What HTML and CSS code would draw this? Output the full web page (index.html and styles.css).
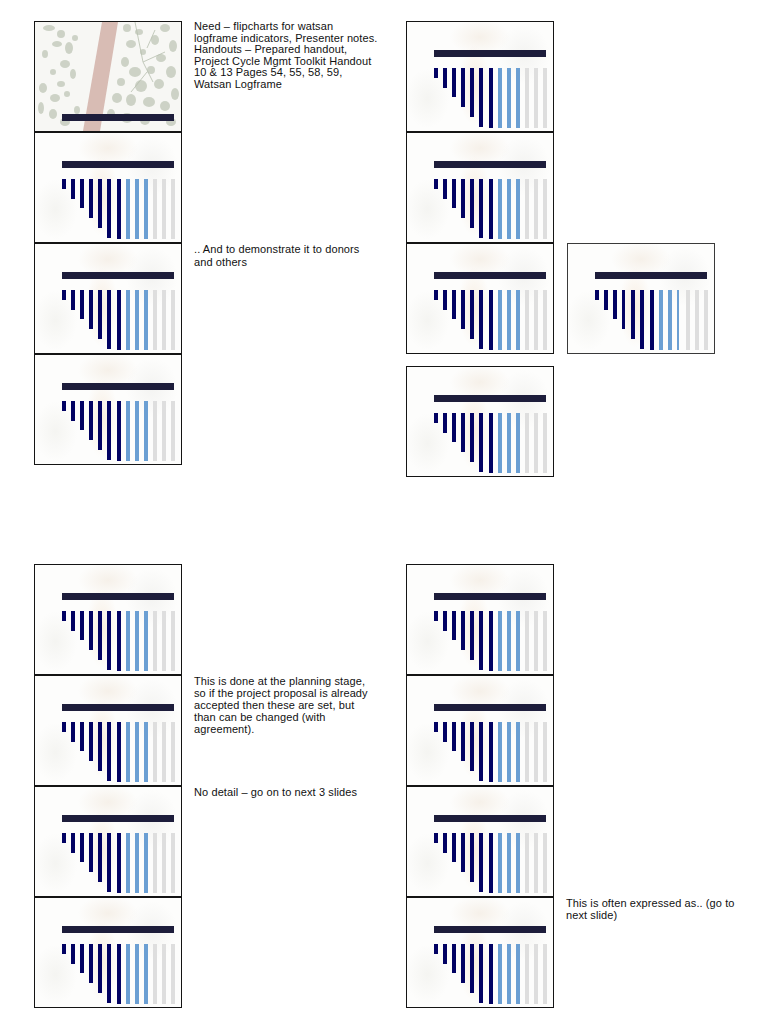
FILE: index.html
```html
<!DOCTYPE html>
<html lang="en">
<head>
<meta charset="utf-8">
<title>Handout slides</title>
<link rel="stylesheet" href="styles.css">
</head>
<body>
<div class="sheet">
  <section class="half">
    <div class="group group-left">
      <div class="row">
        <div class="slide slide-photo">
          <svg class="photo" viewBox="0 0 146 109" preserveAspectRatio="none" aria-hidden="true">
            <rect width="146" height="109" fill="#f7f7f4"/>
            <g fill="#c3cabb" opacity="0.8">
              <ellipse cx="14" cy="6" rx="6" ry="3"/>
              <ellipse cx="26" cy="12" rx="4" ry="4"/>
              <ellipse cx="22" cy="22" rx="5" ry="3"/>
              <ellipse cx="34" cy="26" rx="4" ry="6"/>
              <ellipse cx="40" cy="16" rx="3" ry="3"/>
              <ellipse cx="10" cy="32" rx="3" ry="4"/>
              <ellipse cx="30" cy="42" rx="5" ry="4"/>
              <ellipse cx="18" cy="50" rx="3" ry="3"/>
              <ellipse cx="38" cy="52" rx="3" ry="5"/>
              <ellipse cx="26" cy="62" rx="4" ry="3"/>
              <ellipse cx="8" cy="66" rx="4" ry="5"/>
              <ellipse cx="20" cy="76" rx="5" ry="4"/>
              <ellipse cx="32" cy="72" rx="3" ry="3"/>
              <ellipse cx="6" cy="86" rx="3" ry="6"/>
              <ellipse cx="18" cy="92" rx="4" ry="5"/>
              <ellipse cx="30" cy="100" rx="5" ry="4"/>
              <ellipse cx="42" cy="88" rx="3" ry="4"/>
              <ellipse cx="92" cy="6" rx="4" ry="4"/>
              <ellipse cx="104" cy="10" rx="4" ry="3"/>
              <ellipse cx="130" cy="6" rx="5" ry="4"/>
              <ellipse cx="120" cy="18" rx="4" ry="5"/>
              <ellipse cx="96" cy="22" rx="5" ry="4"/>
              <ellipse cx="138" cy="24" rx="4" ry="6"/>
              <ellipse cx="108" cy="30" rx="3" ry="3"/>
              <ellipse cx="126" cy="36" rx="5" ry="4"/>
              <ellipse cx="90" cy="40" rx="4" ry="5"/>
              <ellipse cx="100" cy="50" rx="6" ry="5"/>
              <ellipse cx="116" cy="48" rx="4" ry="4"/>
              <ellipse cx="136" cy="50" rx="5" ry="6"/>
              <ellipse cx="86" cy="60" rx="4" ry="4"/>
              <ellipse cx="106" cy="64" rx="6" ry="6"/>
              <ellipse cx="124" cy="62" rx="5" ry="5"/>
              <ellipse cx="140" cy="72" rx="4" ry="6"/>
              <ellipse cx="82" cy="76" rx="5" ry="5"/>
              <ellipse cx="96" cy="78" rx="5" ry="6"/>
              <ellipse cx="114" cy="80" rx="6" ry="5"/>
              <ellipse cx="130" cy="84" rx="5" ry="5"/>
              <ellipse cx="76" cy="92" rx="4" ry="5"/>
              <ellipse cx="92" cy="96" rx="6" ry="5"/>
              <ellipse cx="110" cy="98" rx="5" ry="5"/>
              <ellipse cx="136" cy="100" rx="5" ry="4"/>
            </g>
            <polygon points="48,109 65,109 83,0 67,0" fill="#d4b5ad" opacity="0.9"/>
            <g stroke="#b8c0b0" stroke-width="1" opacity="0.8" fill="none">
              <path d="M100 0 L108 40 L118 60"/>
              <path d="M108 40 L130 30"/>
              <path d="M112 50 L96 70"/>
              <path d="M120 8 L112 26"/>
            </g>
          </svg>
          <div class="title-bar"></div>
        </div>
        <p class="note note-need">Need – flipcharts for watsan<br>logframe indicators, Presenter notes.<br>Handouts – Prepared handout,<br>Project Cycle Mgmt Toolkit Handout<br>10 &amp; 13 Pages 54, 55, 58, 59,<br>Watsan Logframe</p>
      </div>
      <div class="row">
        <div class="slide">
          <div class="title-bar"></div>
          <div class="bars"><i class="b navy h1"></i><i class="b navy h2"></i><i class="b navy h3"></i><i class="b navy h4"></i><i class="b navy h5"></i><i class="b navy h6"></i><i class="b navy"></i><i class="b blue"></i><i class="b blue"></i><i class="b blue"></i><i class="b grey"></i><i class="b grey"></i><i class="b grey"></i></div>
        </div>
      </div>
      <div class="row">
        <div class="slide">
          <div class="title-bar"></div>
          <div class="bars"><i class="b navy h1"></i><i class="b navy h2"></i><i class="b navy h3"></i><i class="b navy h4"></i><i class="b navy h5"></i><i class="b navy h6"></i><i class="b navy"></i><i class="b blue"></i><i class="b blue"></i><i class="b blue"></i><i class="b grey"></i><i class="b grey"></i><i class="b grey"></i></div>
        </div>
        <p class="note note-loose">.. And to demonstrate it to donors<br>and others</p>
      </div>
      <div class="row">
        <div class="slide">
          <div class="title-bar"></div>
          <div class="bars"><i class="b navy h1"></i><i class="b navy h2"></i><i class="b navy h3"></i><i class="b navy h4"></i><i class="b navy h5"></i><i class="b navy h6"></i><i class="b navy"></i><i class="b blue"></i><i class="b blue"></i><i class="b blue"></i><i class="b grey"></i><i class="b grey"></i><i class="b grey"></i></div>
        </div>
      </div>
    </div>

    <div class="group group-right">
      <div class="row">
        <div class="slide">
          <div class="title-bar"></div>
          <div class="bars"><i class="b navy h1"></i><i class="b navy h2"></i><i class="b navy h3"></i><i class="b navy h4"></i><i class="b navy h5"></i><i class="b navy h6"></i><i class="b navy"></i><i class="b blue"></i><i class="b blue"></i><i class="b blue"></i><i class="b grey"></i><i class="b grey"></i><i class="b grey"></i></div>
        </div>
      </div>
      <div class="row">
        <div class="slide">
          <div class="title-bar"></div>
          <div class="bars"><i class="b navy h1"></i><i class="b navy h2"></i><i class="b navy h3"></i><i class="b navy h4"></i><i class="b navy h5"></i><i class="b navy h6"></i><i class="b navy"></i><i class="b blue"></i><i class="b blue"></i><i class="b blue"></i><i class="b grey"></i><i class="b grey"></i><i class="b grey"></i></div>
        </div>
      </div>
      <div class="row row-pair">
        <div class="slide">
          <div class="title-bar"></div>
          <div class="bars"><i class="b navy h1"></i><i class="b navy h2"></i><i class="b navy h3"></i><i class="b navy h4"></i><i class="b navy h5"></i><i class="b navy h6"></i><i class="b navy"></i><i class="b blue"></i><i class="b blue"></i><i class="b blue"></i><i class="b grey"></i><i class="b grey"></i><i class="b grey"></i></div>
        </div>
        <div class="slide slide-alone">
          <div class="title-bar"></div>
          <div class="bars"><i class="b navy h1"></i><i class="b navy h2"></i><i class="b navy h3"></i><i class="b navy h4 thin"></i><i class="b navy h5"></i><i class="b navy h6"></i><i class="b navy"></i><i class="b blue"></i><i class="b blue"></i><i class="b blue thin"></i><i class="b grey"></i><i class="b grey"></i><i class="b grey"></i></div>
        </div>
      </div>
      <div class="row row-apart">
        <div class="slide">
          <div class="title-bar"></div>
          <div class="bars"><i class="b navy h1"></i><i class="b navy h2"></i><i class="b navy h3"></i><i class="b navy h4"></i><i class="b navy h5"></i><i class="b navy h6"></i><i class="b navy"></i><i class="b blue"></i><i class="b blue"></i><i class="b blue"></i><i class="b grey"></i><i class="b grey"></i><i class="b grey"></i></div>
        </div>
      </div>
    </div>
  </section>

  <section class="half half-bottom">
    <div class="group group-left">
      <div class="row">
        <div class="slide">
          <div class="title-bar"></div>
          <div class="bars"><i class="b navy h1"></i><i class="b navy h2"></i><i class="b navy h3"></i><i class="b navy h4"></i><i class="b navy h5"></i><i class="b navy h6"></i><i class="b navy"></i><i class="b blue"></i><i class="b blue"></i><i class="b blue"></i><i class="b grey"></i><i class="b grey"></i><i class="b grey"></i></div>
        </div>
      </div>
      <div class="row">
        <div class="slide">
          <div class="title-bar"></div>
          <div class="bars"><i class="b navy h1"></i><i class="b navy h2"></i><i class="b navy h3"></i><i class="b navy h4"></i><i class="b navy h5"></i><i class="b navy h6"></i><i class="b navy"></i><i class="b blue"></i><i class="b blue"></i><i class="b blue"></i><i class="b grey"></i><i class="b grey"></i><i class="b grey"></i></div>
        </div>
        <p class="note">This is done at the planning stage,<br>so if the project proposal is already<br>accepted then these are set, but<br>than can be changed (with<br>agreement).</p>
      </div>
      <div class="row">
        <div class="slide">
          <div class="title-bar"></div>
          <div class="bars"><i class="b navy h1"></i><i class="b navy h2"></i><i class="b navy h3"></i><i class="b navy h4"></i><i class="b navy h5"></i><i class="b navy h6"></i><i class="b navy"></i><i class="b blue"></i><i class="b blue"></i><i class="b blue"></i><i class="b grey"></i><i class="b grey"></i><i class="b grey"></i></div>
        </div>
        <p class="note">No detail – go on to next 3 slides</p>
      </div>
      <div class="row">
        <div class="slide">
          <div class="title-bar"></div>
          <div class="bars"><i class="b navy h1"></i><i class="b navy h2"></i><i class="b navy h3"></i><i class="b navy h4"></i><i class="b navy h5"></i><i class="b navy h6"></i><i class="b navy"></i><i class="b blue"></i><i class="b blue"></i><i class="b blue"></i><i class="b grey"></i><i class="b grey"></i><i class="b grey"></i></div>
        </div>
      </div>
    </div>

    <div class="group group-right">
      <div class="row">
        <div class="slide">
          <div class="title-bar"></div>
          <div class="bars"><i class="b navy h1"></i><i class="b navy h2"></i><i class="b navy h3"></i><i class="b navy h4"></i><i class="b navy h5"></i><i class="b navy h6"></i><i class="b navy"></i><i class="b blue"></i><i class="b blue"></i><i class="b blue"></i><i class="b grey"></i><i class="b grey"></i><i class="b grey"></i></div>
        </div>
      </div>
      <div class="row">
        <div class="slide">
          <div class="title-bar"></div>
          <div class="bars"><i class="b navy h1"></i><i class="b navy h2"></i><i class="b navy h3"></i><i class="b navy h4"></i><i class="b navy h5"></i><i class="b navy h6"></i><i class="b navy"></i><i class="b blue"></i><i class="b blue"></i><i class="b blue"></i><i class="b grey"></i><i class="b grey"></i><i class="b grey"></i></div>
        </div>
      </div>
      <div class="row">
        <div class="slide">
          <div class="title-bar"></div>
          <div class="bars"><i class="b navy h1"></i><i class="b navy h2"></i><i class="b navy h3"></i><i class="b navy h4"></i><i class="b navy h5"></i><i class="b navy h6"></i><i class="b navy"></i><i class="b blue"></i><i class="b blue"></i><i class="b blue"></i><i class="b grey"></i><i class="b grey"></i><i class="b grey"></i></div>
        </div>
      </div>
      <div class="row">
        <div class="slide">
          <div class="title-bar"></div>
          <div class="bars"><i class="b navy h1"></i><i class="b navy h2"></i><i class="b navy h3"></i><i class="b navy h4"></i><i class="b navy h5"></i><i class="b navy h6"></i><i class="b navy"></i><i class="b blue"></i><i class="b blue"></i><i class="b blue"></i><i class="b grey"></i><i class="b grey"></i><i class="b grey"></i></div>
        </div>
        <p class="note">This is often expressed as.. (go to<br>next slide)</p>
      </div>
    </div>
  </section>
</div>
</body>
</html>
```

FILE: styles.css
```css
* { box-sizing: border-box; }

html, body {
  margin: 0;
  padding: 0;
  background: #ffffff;
}

body {
  font-family: "Liberation Sans", Arial, sans-serif;
  color: #111111;
}

.sheet {
  padding: 21px 0 0 34px;
  width: 768px;
}

.half {
  display: flex;
  align-items: flex-start;
}

.half-bottom {
  margin-top: 87px;
}

.group {
  display: flex;
  flex-direction: column;
}

.group-left {
  width: 372px;
}

.row {
  display: flex;
  align-items: flex-start;
  gap: 12px;
}

.row-pair {
  gap: 13px;
}

.row-apart {
  margin-top: 12px;
}

.slide {
  position: relative;
  flex: none;
  width: 148px;
  height: 111px;
  border: 1px solid #141414;
  padding: 28px 0 0 27px;
  overflow: hidden;
  background:
    radial-gradient(ellipse 16px 40px at 46% 58%, rgba(236, 205, 170, 0.32), rgba(236, 205, 170, 0) 100%),
    radial-gradient(ellipse 30px 18px at 50% 14%, rgba(230, 212, 190, 0.30), rgba(230, 212, 190, 0) 100%),
    radial-gradient(ellipse 26px 30px at 80% 30%, rgba(210, 210, 205, 0.22), rgba(210, 210, 205, 0) 100%),
    radial-gradient(ellipse 22px 30px at 14% 70%, rgba(215, 215, 205, 0.22), rgba(215, 215, 205, 0) 100%),
    #fdfdfc;
}

.slide-photo {
  padding-top: 92px;
  background: #f7f7f4;
}

.photo {
  position: absolute;
  left: 0;
  top: 0;
  width: 146px;
  height: 109px;
  display: block;
}

.slide-alone {
  border-color: #3a3a3a;
}

.title-bar {
  position: relative;
  width: 112px;
  height: 7px;
  background: #1d1d3b;
}

.bars {
  display: flex;
  align-items: flex-start;
  gap: 5.1px;
  margin-top: 11px;
  width: 114px;
}

.b {
  display: block;
  flex: none;
  width: 4px;
  height: 60px;
}

.b.thin { width: 2.6px; margin-right: 1.4px; }

.navy { background: #020263; }
.blue { background: #6b9fd3; }
.grey { background: #dedede; }

.h1 { height: 10px; }
.h2 { height: 20px; }
.h3 { height: 29px; }
.h4 { height: 39px; }
.h5 { height: 49px; }
.h6 { height: 59px; }

.note {
  margin: 0;
  font-size: 11px;
  line-height: 12px;
  white-space: nowrap;
  letter-spacing: 0.1px;
}

.note-need {
  line-height: 11.6px;
}

.note-loose {
  line-height: 13px;
}
```
